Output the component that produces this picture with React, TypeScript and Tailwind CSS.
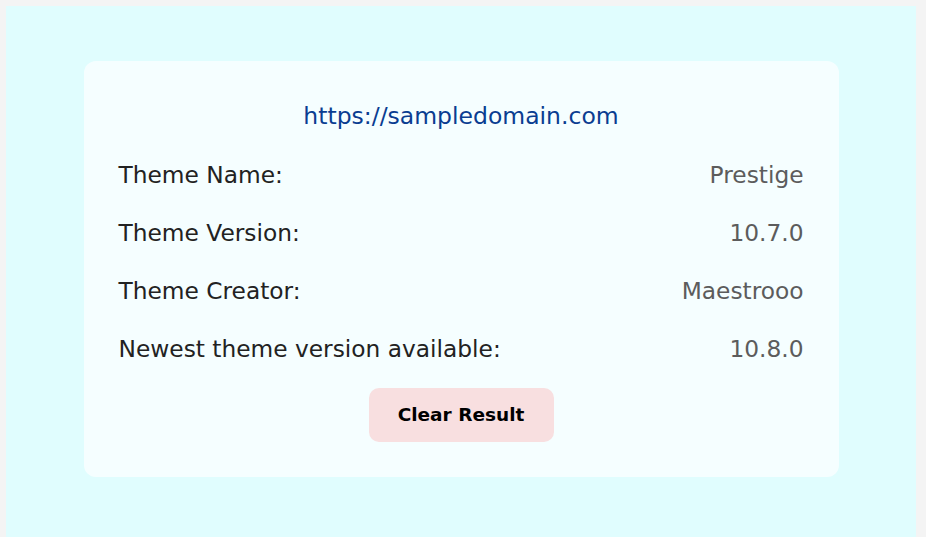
export default function App() {
  const rows: [string, string][] = [
    ["Theme Name:", "Prestige"],
    ["Theme Version:", "10.7.0"],
    ["Theme Creator:", "Maestrooo"],
    ["Newest theme version available:", "10.8.0"],
  ];

  return (
    <div
      className="min-h-screen bg-[#f4f4f4] pt-[6px] pl-[6px] pr-[10px]"
      style={{ fontFamily: '"DejaVu Sans", "Liberation Sans", sans-serif' }}
    >
      <div className="bg-[#e0fdfe] pt-[55px] pb-[80px] flex justify-center">
        <div className="w-[755px] rounded-xl bg-[#f5feff] px-[35px] pt-[27px] pb-[35px] flex flex-col">
          <div className="h-[58px] flex items-center justify-center text-[23.5px] text-[#0a3d91]">
            https://sampledomain.com
          </div>
          {rows.map(([label, value]) => (
            <div
              key={label}
              className="h-[58px] flex items-center justify-between text-[23.3px]"
            >
              <span className="text-[#222222]">{label}</span>
              <span className="text-[#5c5c5c]">{value}</span>
            </div>
          ))}
          <div className="mt-[10px] flex justify-center">
            <button className="w-[185px] h-[54px] rounded-[10px] bg-[#f8dfe0] text-[18.5px] font-bold text-black">
              Clear Result
            </button>
          </div>
        </div>
      </div>
    </div>
  );
}
